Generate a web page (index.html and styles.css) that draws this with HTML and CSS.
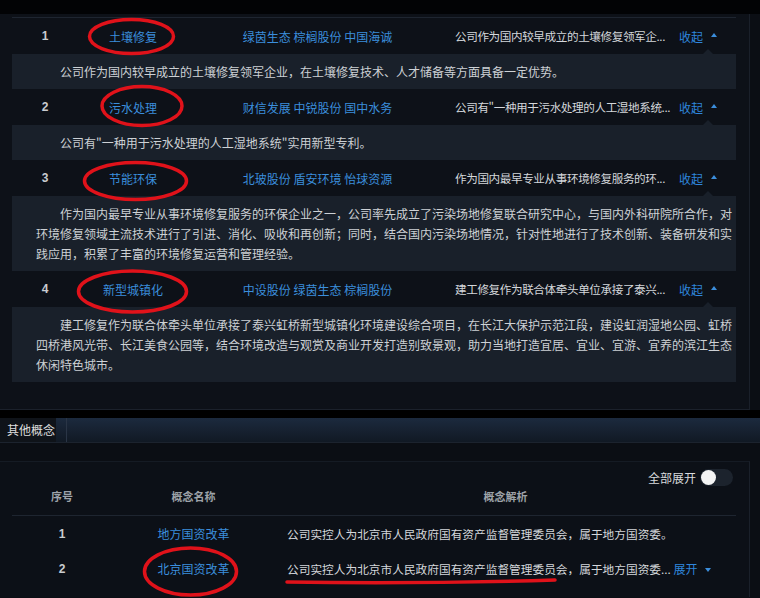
FILE: index.html
```html
<!DOCTYPE html>
<html lang="zh-CN">
<head>
    <meta charset="UTF-8">
    <title>概念题材</title>
    <link rel="stylesheet" href="styles.css">
</head>
<body>

<div class="topband"></div>

<div class="panel panel-top">
    <div class="concept-table">
        <div class="row">
            <span class="c-no">1</span>
            <span class="c-name"><a class="link">土壤修复</a></span>
            <span class="c-stocks"><a class="link">绿茵生态</a> <a class="link">棕榈股份</a> <a class="link">中国海诚</a></span>
            <span class="c-desc"><span class="clip">公司作为国内较早成立的土壤修复领军企...</span><a class="more up">收起</a></span>
        </div>
        <div class="detail">公司作为国内较早成立的土壤修复领军企业，在土壤修复技术、人才储备等方面具备一定优势。</div>

        <div class="row">
            <span class="c-no">2</span>
            <span class="c-name"><a class="link">污水处理</a></span>
            <span class="c-stocks"><a class="link">财信发展</a> <a class="link">中锐股份</a> <a class="link">国中水务</a></span>
            <span class="c-desc"><span class="clip">公司有"一种用于污水处理的人工湿地系统...</span><a class="more up">收起</a></span>
        </div>
        <div class="detail">公司有"一种用于污水处理的人工湿地系统"实用新型专利。</div>

        <div class="row">
            <span class="c-no">3</span>
            <span class="c-name"><a class="link">节能环保</a></span>
            <span class="c-stocks"><a class="link">北玻股份</a> <a class="link">盾安环境</a> <a class="link">怡球资源</a></span>
            <span class="c-desc"><span class="clip">作为国内最早专业从事环境修复服务的环...</span><a class="more up">收起</a></span>
        </div>
        <div class="detail">作为国内最早专业从事环境修复服务的环保企业之一，公司率先成立了污染场地修复联合研究中心，与国内外科研院所合作，对<br>环境修复领域主流技术进行了引进、消化、吸收和再创新；同时，结合国内污染场地情况，针对性地进行了技术创新、装备研发和实<br>践应用，积累了丰富的环境修复运营和管理经验。</div>

        <div class="row">
            <span class="c-no">4</span>
            <span class="c-name"><a class="link">新型城镇化</a></span>
            <span class="c-stocks"><a class="link">中设股份</a> <a class="link">绿茵生态</a> <a class="link">棕榈股份</a></span>
            <span class="c-desc"><span class="clip">建工修复作为联合体牵头单位承接了泰兴...</span><a class="more up">收起</a></span>
        </div>
        <div class="detail">建工修复作为联合体牵头单位承接了泰兴虹桥新型城镇化环境建设综合项目，在长江大保护示范江段，建设虹润湿地公园、虹桥<br>四桥港风光带、长江美食公园等，结合环境改造与观赏及商业开发打造别致景观，助力当地打造宜居、宜业、宜游、宜养的滨江生态<br>休闲特色城市。</div>
    </div>
</div>

<div class="blackband"></div>

<div class="tabbar">
    <span class="tab">其他概念</span>
    <span class="tab-sep"></span>
</div>

<div class="panel panel-bottom">
    <div class="switch-row">
        <span>全部展开</span>
        <span class="switch"><span class="knob"></span></span>
    </div>
    <div class="other-table">
        <div class="thead">
            <span>序号</span>
            <span>概念名称</span>
            <span>概念解析</span>
        </div>
        <div class="orow">
            <span class="o-no">1</span>
            <span class="o-name"><a class="link">地方国资改革</a></span>
            <span class="o-desc">公司实控人为北京市人民政府国有资产监督管理委员会，属于地方国资委。</span>
        </div>
        <div class="orow">
            <span class="o-no">2</span>
            <span class="o-name"><a class="link">北京国资改革</a></span>
            <span class="o-desc">公司实控人为北京市人民政府国有资产监督管理委员会，属于地方国资委... <a class="more down">展开</a></span>
        </div>
    </div>
</div>

<!-- red hand-drawn marks on top of the screenshot -->
<svg class="marks" width="760" height="598" viewBox="0 0 760 598">
    <ellipse cx="131.5" cy="36.5" rx="42" ry="17"/>
    <ellipse cx="142" cy="106" rx="40" ry="19.5"/>
    <ellipse cx="135.5" cy="181" rx="51" ry="18.5"/>
    <ellipse cx="132.5" cy="291.5" rx="54" ry="20.5"/>
    <ellipse cx="190.5" cy="571.5" rx="46" ry="23.5"/>
    <path d="M287 582 Q420 584 555 580"/>
</svg>

</body>
</html>
```

FILE: styles.css
```css
body {
    margin: 0;
    width: 760px;
    height: 598px;
    overflow: hidden;
    position: relative;
    background-color: #0b0e14;
    font-family: "Noto Sans CJK SC", "Liberation Sans", sans-serif;
    font-size: 12px;
    color: #d4d7db;
}

.topband {
    height: 14px;
    background-color: #020305;
}

.panel {
    width: 750px;
    background-color: #0d1118;
    border-right: 1px solid #1a202a;
    box-sizing: border-box;
}

.panel-top {
    padding: 3px 0 27px;
    border-bottom: 1px solid #1b212b;
}

.concept-table {
    margin-left: 12px;
    width: 724px;
    border-top: 1px solid #1e2530;
}

.row {
    display: grid;
    grid-template-columns: 66px 110px 259px 1fr;
    align-items: center;
    height: 36px;
    white-space: nowrap;
}

.c-no, .o-no {
    text-align: center;
    color: #c9ccd0;
    font-weight: bold;
    font-family: "Liberation Sans", sans-serif;
}

.c-name, .c-stocks, .o-name {
    text-align: center;
}

.c-desc {
    padding-left: 8px;
    display: flex;
    align-items: center;
}

.clip {
    display: inline-block;
    width: 224px;
    overflow: hidden;
    font-size: 11.6px;
    letter-spacing: -0.4px;
}

.link {
    color: #3b8edc;
}

.more {
    color: #2f86dc;
    position: relative;
    padding-right: 14px;
}

.more::after {
    content: "";
    position: absolute;
    right: 0;
    top: 50%;
    border-left: 3px solid transparent;
    border-right: 3px solid transparent;
}

.more.up::after {
    margin-top: -3px;
    border-bottom: 4px solid #3b8edc;
}

.more.down::after {
    margin-top: -1px;
    border-top: 4px solid #3b8edc;
}

.detail {
    position: relative;
    background-color: #19202a;
    padding: 7.5px 10px 7.5px 24px;
    line-height: 20px;
    text-indent: 24px;
    color: #cdd1d5;
    white-space: nowrap;
}

.detail::before {
    content: "";
    position: absolute;
    top: -5px;
    right: 23px;
    border-left: 5px solid transparent;
    border-right: 5px solid transparent;
    border-bottom: 5px solid #19202a;
}

.blackband {
    height: 8px;
    background-color: #000;
}

.tabbar {
    display: flex;
    height: 24px;
    background: linear-gradient(#1c2a3e, #111924);
    border-bottom: 1px solid #1c232e;
}

.tab {
    width: 56px;
    padding-left: 7px;
    box-sizing: border-box;
    line-height: 24px;
    background-color: #0f1319;
    color: #dedede;
}

.tab-sep {
    width: 1px;
    margin-left: 10px;
    background-color: #2a3546;
}

.panel-bottom {
    margin-top: 18px;
    height: 136px;
    background-color: #0c1017;
    border-top: 1px solid #151b24;
}

.switch-row {
    display: flex;
    justify-content: flex-end;
    align-items: center;
    gap: 4px;
    padding: 7px 16px 0 0;
    color: #d8dadd;
}

.switch {
    display: flex;
    align-items: center;
    width: 33px;
    height: 17px;
    border-radius: 9px;
    background-color: #1c232d;
}

.knob {
    width: 15px;
    height: 15px;
    margin-left: 1px;
    border-radius: 50%;
    background-color: #f4f4f4;
}

.other-table {
    margin-left: 12px;
    width: 724px;
}

.thead, .orow {
    display: grid;
    grid-template-columns: 100px 163px 1fr;
    align-items: center;
}

.thead {
    padding: 2px 0 11px;
    line-height: 16px;
    border-bottom: 1px solid #1e2530;
    font-size: 11px;
    font-weight: bold;
    color: #9ea3a9;
    text-align: center;
}

.orow {
    height: 35px;
    white-space: nowrap;
}

.o-desc {
    padding-left: 12px;
    font-size: 11.7px;
}

.o-desc .more {
    font-size: 12px;
}

.marks {
    position: absolute;
    left: 0;
    top: 0;
    pointer-events: none;
}

.marks ellipse, .marks path {
    fill: none;
    stroke: #e0121a;
    stroke-width: 3.5;
}

.marks path {
    stroke-linecap: round;
}
```
